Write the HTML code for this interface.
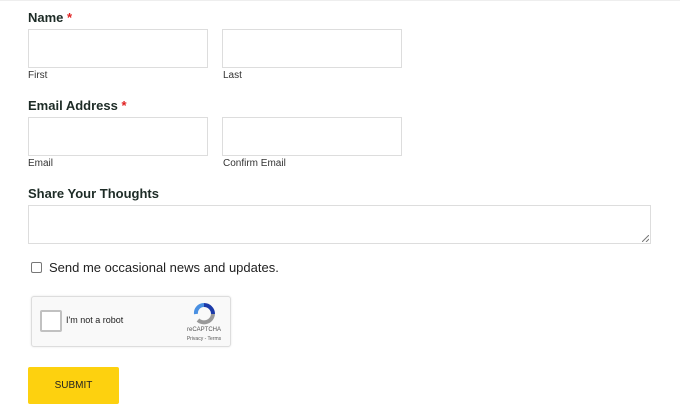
<!DOCTYPE html>
<html><head><style>
body{margin:0;width:680px;height:416px;background:#fff;font-family:"Liberation Sans",sans-serif;position:relative;overflow:hidden}
.a{position:absolute}
.lbl{font-weight:bold;font-size:13px;color:#1d2b26}
.lbl span{color:#e02020}
.in{border:1px solid #ddd;background:#fff;box-sizing:border-box}
.sub{font-size:10px;color:#333}
</style></head><body>
<div class="a" style="left:0;top:0;width:680px;height:1px;background:#eee"></div>
<div class="a lbl" style="left:28px;top:10px">Name <span>*</span></div>
<div class="a in" style="left:28px;top:29px;width:180px;height:39px"></div>
<div class="a in" style="left:222px;top:29px;width:180px;height:39px"></div>
<div class="a sub" style="left:28px;top:70px">First</div>
<div class="a sub" style="left:223px;top:70px">Last</div>
<div class="a lbl" style="left:28px;top:98px">Email Address <span>*</span></div>
<div class="a in" style="left:28px;top:117px;width:180px;height:39px"></div>
<div class="a in" style="left:222px;top:117px;width:180px;height:39px"></div>
<div class="a sub" style="left:28px;top:158px">Email</div>
<div class="a sub" style="left:223px;top:158px">Confirm Email</div>
<div class="a lbl" style="left:28px;top:186px">Share Your Thoughts</div>
<div class="a in" style="left:28px;top:205px;width:623px;height:39px"></div>
<svg class="a" style="left:642px;top:235px" width="7" height="7"><path d="M0 7L7 0M4 7L7 4" stroke="#777" stroke-width="1"/></svg>
<div class="a" style="left:31px;top:262px;width:9px;height:9px;border:1px solid #777;border-radius:2px"></div>
<div class="a" style="left:49px;top:260px;font-size:13px;color:#222">Send me occasional news and updates.</div>
<div class="a" style="left:31px;top:296px;width:198px;height:49px;border:1px solid #ddd;border-radius:3px;background:#f9f9f9;box-shadow:0 0 2px rgba(0,0,0,.1)"></div>
<div class="a" style="left:40px;top:310px;width:18px;height:18px;border:2px solid #c1c1c1;border-radius:2px;background:#fff"></div>
<div class="a" style="left:66px;top:315px;font-size:9px;color:#222">I'm not a robot</div>
<svg class="a" style="left:193px;top:303px" width="22" height="22" viewBox="0 0 22 22"><path d="M11 2A9 9 0 0 1 20 11" stroke="#1c3aa9" stroke-width="4" fill="none"/><path d="M20 11A9 9 0 0 1 5 17" stroke="#999" stroke-width="4" fill="none"/><path d="M3 11A8 8 0 0 1 11 2" stroke="#4a90e2" stroke-width="4" fill="none"/></svg>
<div class="a" style="left:180px;top:327px;font-size:6px;color:#555;width:48px;text-align:center">reCAPTCHA</div>
<div class="a" style="left:180px;top:336px;font-size:5px;color:#555;width:48px;text-align:center">Privacy - Terms</div>
<div class="a" style="left:28px;top:367px;width:91px;height:37px;background:#fdd10f;border-radius:2px;font-size:10px;color:#222;text-align:center;line-height:37px">SUBMIT</div>
</body></html>
